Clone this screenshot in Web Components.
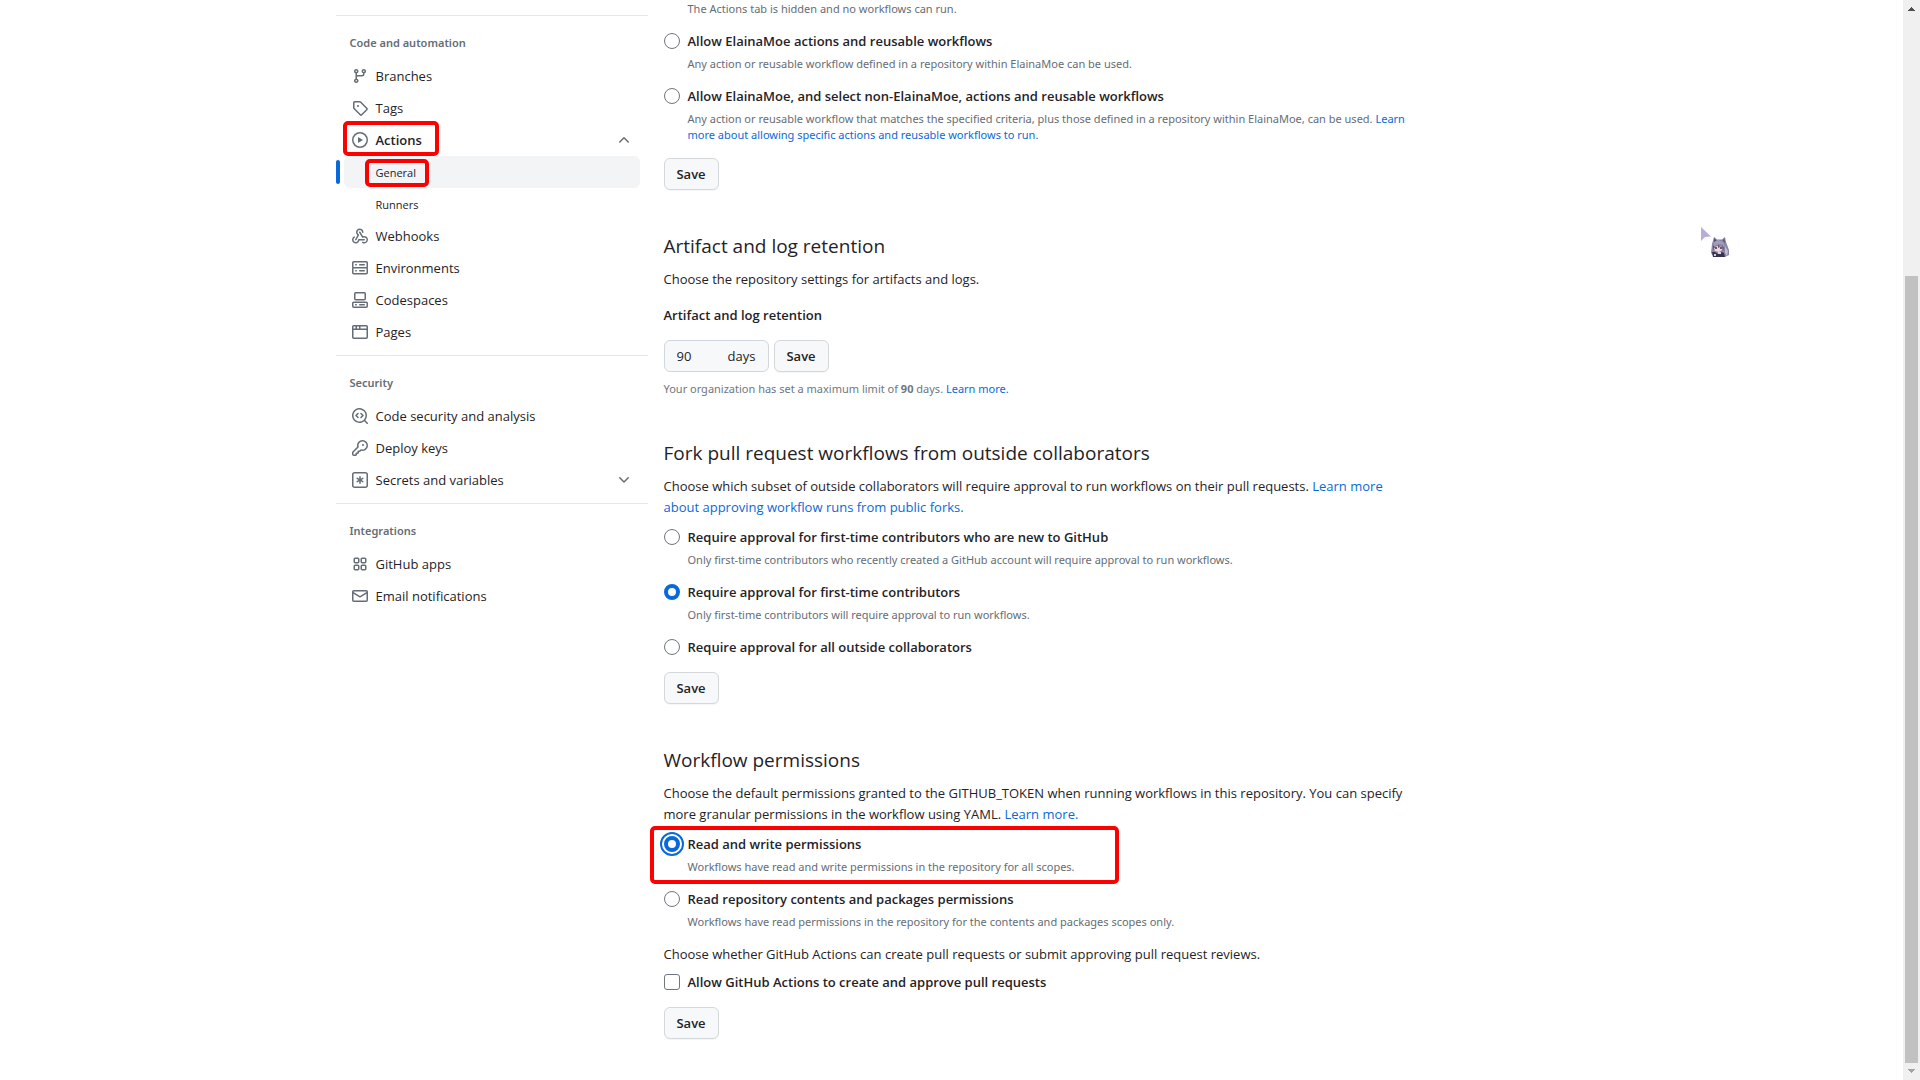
<!DOCTYPE html>
<html lang="en">
<head>
<meta charset="utf-8">
<title>Actions settings</title>
<style>
    :root{
        --text: 13px;
        --small: 11px;
        --small-font: "Noto Sans", "Open Sans", sans-serif;
        --fg: #1f2328;
        --muted: #656d76;
        --accent: #0969da;
        --line: #e4e7ea;
        --subtle: #f6f8fa;
        --mark: #ff0000;
    }
    body{
        margin: 0;
        min-height: 100vh;
        display: grid;
        grid-template-columns: minmax(0, 1fr) 17px;
        background: #fff;
        color: var(--fg);
        font-family: "Open Sans", "Noto Sans", sans-serif;
        font-size: var(--text);
        line-height: 21px;
    }
    a{
        color: var(--accent);
        text-decoration: none;
    }
</style>
</head>
<body>

<settings-layout>
    <nav slot="side" aria-label="Repository settings">
        <nav-group heading="Code and automation">
            <nav-item icon="branch">Branches</nav-item>
            <nav-item icon="tag">Tags</nav-item>
            <nav-item icon="play" expand="up" marked>Actions</nav-item>
            <nav-item sub current marked>General</nav-item>
            <nav-item sub>Runners</nav-item>
            <nav-item icon="webhook">Webhooks</nav-item>
            <nav-item icon="server">Environments</nav-item>
            <nav-item icon="codespaces">Codespaces</nav-item>
            <nav-item icon="browser">Pages</nav-item>
        </nav-group>
        <nav-group heading="Security">
            <nav-item icon="codescan">Code security and analysis</nav-item>
            <nav-item icon="key">Deploy keys</nav-item>
            <nav-item icon="secret" expand="down">Secrets and variables</nav-item>
        </nav-group>
        <nav-group heading="Integrations">
            <nav-item icon="apps">GitHub apps</nav-item>
            <nav-item icon="mail">Email notifications</nav-item>
        </nav-group>
    </nav>

    <settings-section>
        <option-note>The Actions tab is hidden and no workflows can run.</option-note>
        <setting-option group="policy" label="Allow ElainaMoe actions and reusable workflows">Any action or reusable workflow defined in a repository within ElainaMoe can be used.</setting-option>
        <setting-option group="policy" label="Allow ElainaMoe, and select non-ElainaMoe, actions and reusable workflows">Any action or reusable workflow that matches the specified criteria, plus those defined in a repository within ElainaMoe, can be used. <a href="#">Learn more about allowing specific actions and reusable workflows to run.</a></setting-option>
        <save-button slot="action">Save</save-button>
    </settings-section>

    <settings-section heading="Artifact and log retention">
        <span slot="intro">Choose the repository settings for artifacts and logs.</span>
        <retention-field label="Artifact and log retention" value="90" unit="days">Your organization has set a maximum limit of <b>90</b> days. <a href="#">Learn more.</a></retention-field>
    </settings-section>

    <settings-section heading="Fork pull request workflows from outside collaborators">
        <span slot="intro">Choose which subset of outside collaborators will require approval to run workflows on their pull requests. <a href="#">Learn more about approving workflow runs from public forks.</a></span>
        <setting-option group="fork" label="Require approval for first-time contributors who are new to GitHub">Only first-time contributors who recently created a GitHub account will require approval to run workflows.</setting-option>
        <setting-option group="fork" checked label="Require approval for first-time contributors">Only first-time contributors will require approval to run workflows.</setting-option>
        <setting-option group="fork" label="Require approval for all outside collaborators"></setting-option>
        <save-button slot="action">Save</save-button>
    </settings-section>

    <settings-section heading="Workflow permissions">
        <span slot="intro">Choose the default permissions granted to the GITHUB_TOKEN when running workflows in this repository. You can specify more granular permissions in the workflow using YAML. <a href="#">Learn more.</a></span>
        <setting-option group="token" checked focused marked label="Read and write permissions">Workflows have read and write permissions in the repository for all scopes.</setting-option>
        <setting-option group="token" label="Read repository contents and packages permissions">Workflows have read permissions in the repository for the contents and packages scopes only.</setting-option>
        <section-text>Choose whether GitHub Actions can create pull requests or submit approving pull request reviews.</section-text>
        <setting-option type="checkbox" label="Allow GitHub Actions to create and approve pull requests"></setting-option>
        <save-button slot="action">Save</save-button>
    </settings-section>
</settings-layout>

<page-scrollbar></page-scrollbar>
<mouse-pet></mouse-pet>

<script>
const ICONS = {
    branch: 'M9.5 3.25a2.25 2.25 0 1 1 3 2.122V6A2.5 2.5 0 0 1 10 8.5H6a1 1 0 0 0-1 1v1.128a2.251 2.251 0 1 1-1.5 0V5.372a2.25 2.25 0 1 1 1.5 0v1.836A2.493 2.493 0 0 1 6 7h4a1 1 0 0 0 1-1v-.628A2.25 2.25 0 0 1 9.5 3.25Zm-6 0a.75.75 0 1 0 1.5 0 .75.75 0 0 0-1.5 0Zm8.25-.75a.75.75 0 1 0 0 1.5.75.75 0 0 0 0-1.5ZM4.25 12a.75.75 0 1 0 0 1.5.75.75 0 0 0 0-1.5Z',
    tag: 'M1 7.775V2.75C1 1.784 1.784 1 2.75 1h5.025c.464 0 .91.184 1.238.513l6.25 6.25a1.75 1.75 0 0 1 0 2.474l-5.026 5.026a1.75 1.75 0 0 1-2.474 0l-6.25-6.25A1.752 1.752 0 0 1 1 7.775Zm1.5 0c0 .066.026.13.073.177l6.25 6.25a.25.25 0 0 0 .354 0l5.025-5.025a.25.25 0 0 0 0-.354l-6.25-6.25a.25.25 0 0 0-.177-.073H2.75a.25.25 0 0 0-.25.25ZM6 5a1 1 0 1 1 0 2 1 1 0 0 1 0-2Z',
    play: 'M8 0a8 8 0 1 1 0 16A8 8 0 0 1 8 0ZM1.5 8a6.5 6.5 0 1 0 13 0 6.5 6.5 0 0 0-13 0Zm4.879-2.773 4.264 2.559a.25.25 0 0 1 0 .428l-4.264 2.559A.25.25 0 0 1 6 10.559V5.442a.25.25 0 0 1 .379-.215Z',
    webhook: 'M5.5 4.25a2.25 2.25 0 0 1 4.5 0 .75.75 0 0 0 1.5 0 3.75 3.75 0 1 0-6.14 2.889l-2.272 4.258a.75.75 0 0 0 1.324.706L7 7.25a.75.75 0 0 0-.309-1.015A2.25 2.25 0 0 1 5.5 4.25Z M7.364 3.607a.75.75 0 0 1 1.03.257l2.608 4.349a3.75 3.75 0 1 1-.628 6.785.75.75 0 0 1 .752-1.299 2.25 2.25 0 1 0-.033-3.88.75.75 0 0 1-1.03-.256L7.107 4.636a.75.75 0 0 1 .257-1.03Z M2.9 8.776A.75.75 0 0 1 2.625 9.8 2.25 2.25 0 1 0 6 11.75a.75.75 0 0 1 .75-.751h5.5a.75.75 0 0 1 0 1.5H7.425a3.751 3.751 0 1 1-5.55-3.998.75.75 0 0 1 1.024.274Z',
    server: 'M1.75 1h12.5c.966 0 1.75.784 1.75 1.75v4c0 .372-.116.717-.314 1 .198.283.314.628.314 1v4a1.75 1.75 0 0 1-1.75 1.75H1.75A1.75 1.75 0 0 1 0 12.75v-4c0-.358.109-.707.314-1a1.739 1.739 0 0 1-.314-1v-4C0 1.784.784 1 1.75 1ZM1.5 2.75v4c0 .138.112.25.25.25h12.5a.25.25 0 0 0 .25-.25v-4a.25.25 0 0 0-.25-.25H1.75a.25.25 0 0 0-.25.25Zm.25 5.75a.25.25 0 0 0-.25.25v4c0 .138.112.25.25.25h12.5a.25.25 0 0 0 .25-.25v-4a.25.25 0 0 0-.25-.25ZM7 4.75A.75.75 0 0 1 7.75 4h4.5a.75.75 0 0 1 0 1.5h-4.5A.75.75 0 0 1 7 4.75ZM7.75 10h4.5a.75.75 0 0 1 0 1.5h-4.5a.75.75 0 0 1 0-1.5ZM3 4.75A.75.75 0 0 1 3.75 4h.5a.75.75 0 0 1 0 1.5h-.5A.75.75 0 0 1 3 4.75ZM3.75 10h.5a.75.75 0 0 1 0 1.5h-.5a.75.75 0 0 1 0-1.5Z',
    codespaces: 'M0 11.25c0-.966.784-1.75 1.75-1.75h12.5c.966 0 1.75.784 1.75 1.75v3A1.75 1.75 0 0 1 14.25 16H1.75A1.75 1.75 0 0 1 0 14.25Zm2-9.5C2 .784 2.784 0 3.75 0h8.5C13.216 0 14 .784 14 1.75v5a1.75 1.75 0 0 1-1.75 1.75h-8.5A1.75 1.75 0 0 1 2 6.75Zm1.75-.25a.25.25 0 0 0-.25.25v5c0 .138.112.25.25.25h8.5a.25.25 0 0 0 .25-.25v-5a.25.25 0 0 0-.25-.25Zm-2 9.5a.25.25 0 0 0-.25.25v3c0 .138.112.25.25.25h12.5a.25.25 0 0 0 .25-.25v-3a.25.25 0 0 0-.25-.25Z M7 12.75a.75.75 0 0 1 .75-.75h4.5a.75.75 0 0 1 0 1.5h-4.5a.75.75 0 0 1-.75-.75Zm-4 0a.75.75 0 0 1 .75-.75h.5a.75.75 0 0 1 0 1.5h-.5a.75.75 0 0 1-.75-.75Z',
    browser: 'M0 2.75C0 1.784.784 1 1.75 1h12.5c.966 0 1.75.784 1.75 1.75v10.5A1.75 1.75 0 0 1 14.25 15H1.75A1.75 1.75 0 0 1 0 13.25ZM14.5 6h-13v7.25c0 .138.112.25.25.25h12.5a.25.25 0 0 0 .25-.25Zm-6-3.5v2h6V2.75a.25.25 0 0 0-.25-.25ZM5 2.5v2h2v-2Zm-3.25 0a.25.25 0 0 0-.25.25V4.5h2v-2Z',
    codescan: 'M8.47 4.97a.75.75 0 0 0 0 1.06L9.94 7.5 8.47 8.97a.75.75 0 1 0 1.06 1.06l2-2a.75.75 0 0 0 0-1.06l-2-2a.75.75 0 0 0-1.06 0ZM6.53 6.03a.75.75 0 0 0-1.06-1.06l-2 2a.75.75 0 0 0 0 1.06l2 2a.75.75 0 1 0 1.06-1.06L5.06 7.5l1.47-1.47Z M12.246 13.307a7.501 7.501 0 1 1 1.06-1.06l2.474 2.473a.749.749 0 1 1-1.06 1.06l-2.474-2.473ZM1.5 7.5a6.002 6.002 0 0 0 3.608 5.504 6.002 6.002 0 0 0 6.486-1.117.748.748 0 0 1 .292-.293A6 6 0 1 0 1.5 7.5Z',
    key: 'M10.5 0a5.499 5.499 0 1 1-1.288 10.848l-.932.932a.749.749 0 0 1-.53.22H7v.75a.749.749 0 0 1-.22.53l-.5.5a.749.749 0 0 1-.53.22H5v.75a.749.749 0 0 1-.22.53l-.5.5a.749.749 0 0 1-.53.22h-2A1.75 1.75 0 0 1 0 14.25v-2c0-.199.079-.389.22-.53l4.932-4.932A5.5 5.5 0 0 1 10.5 0Zm-4 5.5c-.001.431.069.86.205 1.269a.75.75 0 0 1-.181.768L1.5 12.56v1.69c0 .138.112.25.25.25h1.69l.06-.06v-1.19a.75.75 0 0 1 .75-.75h1.19l.06-.06v-1.19a.75.75 0 0 1 .75-.75h1.19l1.023-1.025a.75.75 0 0 1 .768-.18A4 4 0 1 0 6.5 5.5ZM11 6a1 1 0 1 1 0-2 1 1 0 0 1 0 2Z',
    secret: 'M0 2.75A2.75 2.75 0 0 1 2.75 0h10.5A2.75 2.75 0 0 1 16 2.75v10.5A2.75 2.75 0 0 1 13.25 16H2.75A2.75 2.75 0 0 1 0 13.25ZM2.75 1.5c-.69 0-1.25.56-1.25 1.25v10.5c0 .69.56 1.25 1.25 1.25h10.5c.69 0 1.25-.56 1.25-1.25V2.75c0-.69-.56-1.25-1.25-1.25Z M8 4a.75.75 0 0 1 .75.75V6.7l1.69-.975a.75.75 0 0 1 .75 1.3L9.5 8l1.69.976a.75.75 0 0 1-.75 1.298L8.75 9.3v1.951a.75.75 0 0 1-1.5 0V9.299l-1.69.976a.75.75 0 0 1-.75-1.3L6.5 8l-1.69-.975a.75.75 0 0 1 .75-1.3l1.69.976V4.75A.75.75 0 0 1 8 4Z',
    apps: 'M1.5 3.25c0-.966.784-1.75 1.75-1.75h2.5c.966 0 1.75.784 1.75 1.75v2.5A1.75 1.75 0 0 1 5.75 7.5h-2.5A1.75 1.75 0 0 1 1.5 5.75Zm7 0c0-.966.784-1.75 1.75-1.75h2.5c.966 0 1.75.784 1.75 1.75v2.5a1.75 1.75 0 0 1-1.75 1.75h-2.5A1.75 1.75 0 0 1 8.5 5.75Zm-7 7c0-.966.784-1.75 1.75-1.75h2.5c.966 0 1.75.784 1.75 1.75v2.5a1.75 1.75 0 0 1-1.75 1.75h-2.5a1.75 1.75 0 0 1-1.75-1.75Zm7 0c0-.966.784-1.75 1.75-1.75h2.5c.966 0 1.75.784 1.75 1.75v2.5a1.75 1.75 0 0 1-1.75 1.75h-2.5a1.75 1.75 0 0 1-1.75-1.75ZM3.25 3a.25.25 0 0 0-.25.25v2.5c0 .138.112.25.25.25h2.5A.25.25 0 0 0 6 5.75v-2.5A.25.25 0 0 0 5.75 3Zm7 0a.25.25 0 0 0-.25.25v2.5c0 .138.112.25.25.25h2.5a.25.25 0 0 0 .25-.25v-2.5a.25.25 0 0 0-.25-.25Zm-7 7a.25.25 0 0 0-.25.25v2.5c0 .138.112.25.25.25h2.5a.25.25 0 0 0 .25-.25v-2.5a.25.25 0 0 0-.25-.25Zm7 0a.25.25 0 0 0-.25.25v2.5c0 .138.112.25.25.25h2.5a.25.25 0 0 0 .25-.25v-2.5a.25.25 0 0 0-.25-.25Z',
    mail: 'M1.75 2h12.5c.966 0 1.75.784 1.75 1.75v8.5A1.75 1.75 0 0 1 14.25 14H1.75A1.75 1.75 0 0 1 0 12.25v-8.5C0 2.784.784 2 1.75 2ZM1.5 12.251c0 .138.112.25.25.25h12.5a.25.25 0 0 0 .25-.25V5.809L8.38 9.397a.75.75 0 0 1-.76 0L1.5 5.809v6.442Zm13-8.181v-.32a.25.25 0 0 0-.25-.25H1.75a.25.25 0 0 0-.25.25v.32L8 7.88Z',
    up: 'M3.22 10.53a.749.749 0 0 1 0-1.06l4.25-4.25a.749.749 0 0 1 1.06 0l4.25 4.25a.749.749 0 1 1-1.06 1.06L8 6.811 4.28 10.53a.749.749 0 0 1-1.06 0Z',
    down: 'M12.78 5.22a.749.749 0 0 1 0 1.06l-4.25 4.25a.749.749 0 0 1-1.06 0L3.22 6.28a.749.749 0 1 1 1.06-1.06L8 8.939l3.72-3.719a.749.749 0 0 1 1.06 0Z'
};

function icon(name) {
    return `<svg width="16" height="16" viewBox="0 0 16 16" fill="currentColor" aria-hidden="true"><path d="${ICONS[name]}"/></svg>`;
}

class SettingsLayout extends HTMLElement{
    constructor() {
        super();
        this.attachShadow({mode: 'open'});
        this.shadowRoot.innerHTML = `
<style>
    :host{
        display: flex;
        gap: 16px;
        width: 100%;
        max-width: 1232px;
        margin: 0 auto;
    }
    aside{
        flex: 0 0 312px;
        padding-top: 8px;
    }
    main{
        flex: 1;
        min-width: 0;
        max-width: 757px;
        padding-top: 1px;
    }
</style>
<aside><slot name="side"></slot></aside>
<main><slot></slot></main>
`;
    }
}

class NavGroup extends HTMLElement{
    constructor() {
        super();
        this.attachShadow({mode: 'open'});
        this.shadowRoot.innerHTML = `
<style>
    :host{
        display: block;
        margin-bottom: 7px;
    }
    .group{
        border-top: 1px solid var(--line);
        margin-top: 7px;
    }
    h3{
        margin: 0;
        padding: 18px 14px 8px;
        color: var(--muted);
        font-family: var(--small-font);
        font-size: var(--small);
        font-weight: 600;
        line-height: 18px;
    }
</style>
<div class="group">
    <h3>${this.getAttribute('heading')}</h3>
    <div role="list"><slot></slot></div>
</div>
`;
    }
}

class NavItem extends HTMLElement{
    constructor() {
        super();
        const name = this.getAttribute('icon');
        const expand = this.getAttribute('expand');

        this.attachShadow({mode: 'open'});
        this.shadowRoot.innerHTML = `
<style>
    :host{
        display: block;
        position: relative;
        padding: 0 8px;
    }
    a, button{
        box-sizing: border-box;
        width: 100%;
        height: 32px;
        display: flex;
        align-items: center;
        gap: 8px;
        margin: 0;
        padding: 0 8px;
        border: 0;
        border-radius: 6px;
        background: none;
        color: inherit;
        font: inherit;
        text-align: left;
        text-decoration: none;
        cursor: pointer;
    }
    svg{
        flex: none;
        color: var(--muted);
    }
    .text{
        flex: 1;
    }
    :host([expand="up"]) .text{
        font-weight: 600;
    }
    :host([sub]) a{
        padding-left: 32px;
        font-size: var(--small);
    }
    :host([current]) a{
        background: #f3f4f6;
    }
    :host([current])::before{
        content: "";
        position: absolute;
        left: 0;
        top: 4px;
        width: 4px;
        height: 24px;
        border-radius: 6px;
        background: var(--accent);
    }
    .mark{
        position: absolute;
        box-sizing: border-box;
        border: 4px solid var(--mark);
        border-radius: 5px;
        pointer-events: none;
    }
    :host([expand]) .mark{
        left: 7px;
        top: -3px;
        width: 96px;
        height: 35px;
    }
    :host([sub]) .mark{
        left: 29px;
        top: 3px;
        width: 64px;
        height: 28px;
    }
</style>
${expand ? '<button type="button">' : '<a href="#">'}
    ${name ? icon(name) : ''}
    <span class="text"><slot></slot></span>
    ${expand ? icon(expand) : ''}
${expand ? '</button>' : '</a>'}
${this.hasAttribute('marked') ? '<div class="mark"></div>' : ''}
`;
        this.setAttribute('role', 'listitem');
    }
}

class SettingsSection extends HTMLElement{
    constructor() {
        super();
        const heading = this.getAttribute('heading');

        this.attachShadow({mode: 'open'});
        this.shadowRoot.innerHTML = `
<style>
    :host{
        display: block;
        margin-bottom: 40px;
    }
    h2{
        margin: 0 0 7px;
        font-size: 19px;
        font-weight: 400;
        line-height: 32px;
    }
    p{
        margin: 0 0 9px;
    }
    .action{
        padding-top: 15px;
    }
</style>
${heading ? `<h2>${heading}</h2><p><slot name="intro"></slot></p>` : ''}
<slot></slot>
${this.querySelector('[slot=action]') ? '<div class="action"><slot name="action"></slot></div>' : ''}
`;
    }
}

class SectionText extends HTMLElement{
    constructor() {
        super();
        this.attachShadow({mode: 'open'});
        this.shadowRoot.innerHTML = `
<style>
    :host{
        display: block;
        padding: 14px 0 7px;
    }
</style>
<slot></slot>
`;
    }
}

class OptionNote extends HTMLElement{
    constructor() {
        super();
        this.attachShadow({mode: 'open'});
        this.shadowRoot.innerHTML = `
<style>
    :host{
        display: block;
        padding-left: 24px;
        color: var(--muted);
        font-family: var(--small-font);
        font-size: var(--small);
        line-height: 16px;
    }
</style>
<slot></slot>
`;
    }
}

class SettingOption extends HTMLElement{
    constructor() {
        super();
        const type = this.getAttribute('type') || 'radio';
        const note = this.textContent.trim() !== '';

        this.attachShadow({mode: 'open'});
        this.shadowRoot.innerHTML = `
<style>
    :host{
        display: block;
        position: relative;
    }
    :host(:not(:first-of-type)), :host([group="policy"]){
        padding-top: 14px;
    }
    :host([type="checkbox"]){
        padding-top: 0;
    }
    .row{
        display: flex;
        align-items: center;
        gap: 8px;
        line-height: 20px;
    }
    input{
        appearance: none;
        flex: none;
        box-sizing: border-box;
        width: 16px;
        height: 16px;
        margin: 0;
        border: 1px solid #6e7781;
        border-radius: 50%;
        background: #fff;
    }
    input[type=checkbox]{
        border-radius: 3px;
    }
    input:checked{
        border: 4px solid var(--accent);
    }
    :host([focused]) input{
        outline: 2px solid var(--accent);
        outline-offset: 2px;
    }
    label{
        font-weight: 600;
    }
    option-note{
        padding-top: 5px;
    }
    .mark{
        position: absolute;
        box-sizing: border-box;
        left: -14px;
        top: -8px;
        width: 469px;
        height: 58px;
        border: 4px solid var(--mark);
        border-radius: 5px;
        pointer-events: none;
    }
</style>
<div class="row">
    <input type="${type}" id="control" ${this.hasAttribute('checked') ? 'checked' : ''}>
    <label for="control">${this.getAttribute('label')}</label>
</div>
${note ? '<option-note><slot></slot></option-note>' : ''}
${this.hasAttribute('marked') ? '<div class="mark"></div>' : ''}
`;
        this.input = this.shadowRoot.querySelector('input');
    }

    connectedCallback() {
        this.input.addEventListener('change', () => this.clearOthers());
    }

    // radios in separate shadow roots do not share a group
    clearOthers() {
        const group = this.getAttribute('group');
        if (group == null) {
            return;
        }
        document.querySelectorAll(`setting-option[group=${group}]`).forEach(option => {
            if (option !== this) {
                option.input.checked = false;
            }
        });
    }
}

class SaveButton extends HTMLElement{
    constructor() {
        super();
        this.attachShadow({mode: 'open'});
        this.shadowRoot.innerHTML = `
<style>
    :host{
        display: block;
    }
    button{
        box-sizing: border-box;
        display: block;
        width: 55px;
        height: 32px;
        padding: 0;
        border: 1px solid #d5d8da;
        border-radius: 6px;
        background: var(--subtle);
        box-shadow: 0 1px 0 rgba(31, 35, 40, 0.04);
        color: var(--fg);
        font: inherit;
        font-weight: 600;
        line-height: 20px;
        cursor: pointer;
    }
</style>
<button type="button"><slot></slot></button>
`;
    }
}

class RetentionField extends HTMLElement{
    constructor() {
        super();
        this.attachShadow({mode: 'open'});
        this.shadowRoot.innerHTML = `
<style>
    :host{
        display: block;
        padding-top: 6px;
    }
    label{
        display: block;
        font-weight: 600;
    }
    .row{
        display: flex;
        gap: 5px;
        padding: 14px 0 9px;
    }
    .box{
        box-sizing: border-box;
        display: flex;
        align-items: center;
        justify-content: space-between;
        width: 105px;
        height: 32px;
        padding: 0 12px;
        border: 1px solid #d0d7de;
        border-radius: 6px;
        background: var(--subtle);
    }
    input{
        width: 40px;
        padding: 0;
        border: 0;
        background: none;
        color: inherit;
        font: inherit;
    }
    .hint{
        color: #6e7781;
        font-family: var(--small-font);
        font-size: var(--small);
        line-height: 16px;
    }
</style>
<label for="days">${this.getAttribute('label')}</label>
<div class="row">
    <div class="box">
        <input type="text" id="days" value="${this.getAttribute('value')}">
        <span>${this.getAttribute('unit')}</span>
    </div>
    <save-button>Save</save-button>
</div>
<div class="hint"><slot></slot></div>
`;
    }
}

class PageScrollbar extends HTMLElement{
    constructor() {
        super();
        this.attachShadow({mode: 'open'});
        this.shadowRoot.innerHTML = `
<style>
    :host{
        position: sticky;
        top: 0;
        box-sizing: border-box;
        display: flex;
        flex-direction: column;
        justify-content: space-between;
        height: 100vh;
        background: #f0f0f0;
    }
    svg{
        display: block;
        flex: none;
    }
    .track{
        flex: 1;
        display: flex;
        flex-direction: column;
        justify-content: flex-end;
        padding: 0 2px;
    }
    .thumb{
        height: 75.2%;
        background: #c1c1c1;
    }
</style>
<svg width="17" height="17" viewBox="0 0 17 17" shape-rendering="crispEdges"><path d="M5 11h7v-1h-1v-1h-1v-1h-1v-1h-1v1h-1v1h-1v1h-1z" fill="#505050"/></svg>
<div class="track"><div class="thumb"></div></div>
<svg width="17" height="17" viewBox="0 0 17 17" shape-rendering="crispEdges"><path d="M5 6h7v1h-1v1h-1v1h-1v1h-1v-1h-1v-1h-1v-1h-1z" fill="#a3a3a3"/></svg>
`;
    }
}

// pointer with a small chibi character hanging on it
class MousePet extends HTMLElement{
    constructor() {
        super();
        this.attachShadow({mode: 'open'});
        this.shadowRoot.innerHTML = `
<style>
    :host{
        position: absolute;
        left: 1700px;
        top: 226px;
        pointer-events: none;
    }
    svg{
        display: block;
    }
</style>
<svg width="30" height="32" viewBox="0 0 30 32" aria-hidden="true">
    <path d="M1 1 11 10.500 5 11 1 15z" fill="#b9add9"/>
    <path d="M12 18 14 11 17 13.500H22L25 11 26 16 29 24 29 29 25 31H14L11 27z" fill="#8a86a3"/>
    <path d="M14 12 17 15 14 17zM24 12 23 15 25 17z" fill="#55506b"/>
    <path d="M14 16 18 14 23 16 25 20 23 21 21 18 16 19 13 22z" fill="#a29dba"/>
    <path d="M14 22 17 20 22 21 22 24 19 26 15 25z" fill="#ecd8d6"/>
    <path d="M15 21h2v2h-2zM20 21h2v2h-2z" fill="#7d4a72"/>
    <path d="M18 18 20 21 18 22zM13 19 15 21 13 24zM22 18 24 22 23 25z" fill="#5e5976"/>
    <path d="M12 26h3l3 2 4-2 2 1 1 4H13z" fill="#37304f"/>
    <path d="M18 26h3v2h-3zM14 28h2v2h-2z" fill="#d8d2e4"/>
    <path d="M25 20 28 25 27 30 25 27z" fill="#c1bdd3"/>
</svg>
`;
    }
}

customElements.define('settings-layout', SettingsLayout);
customElements.define('nav-group', NavGroup);
customElements.define('nav-item', NavItem);
customElements.define('settings-section', SettingsSection);
customElements.define('section-text', SectionText);
customElements.define('option-note', OptionNote);
customElements.define('setting-option', SettingOption);
customElements.define('save-button', SaveButton);
customElements.define('retention-field', RetentionField);
customElements.define('page-scrollbar', PageScrollbar);
customElements.define('mouse-pet', MousePet);
</script>
</body>
</html>
